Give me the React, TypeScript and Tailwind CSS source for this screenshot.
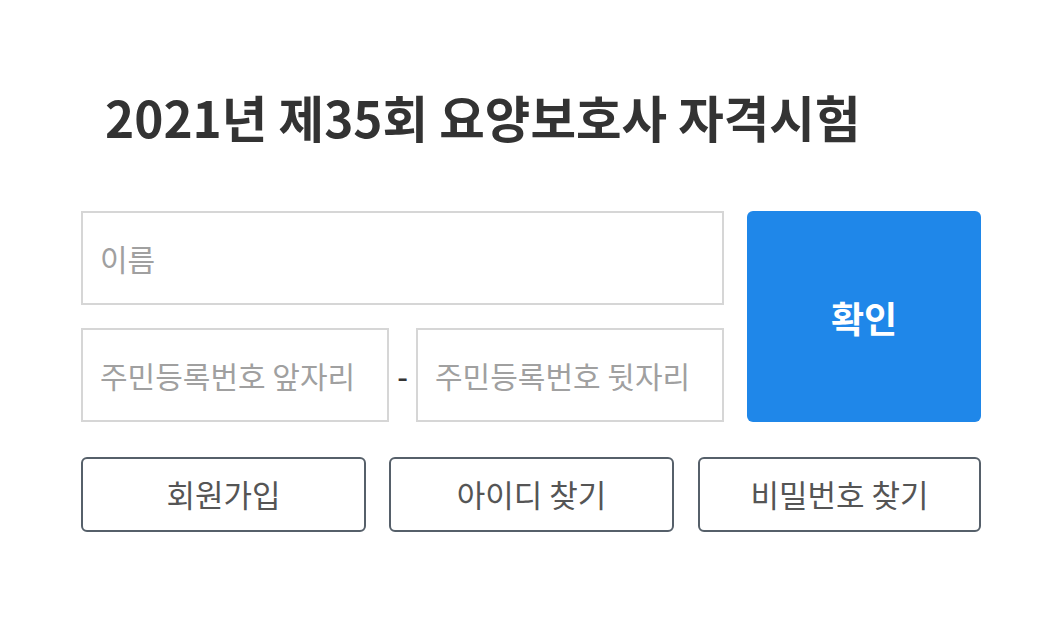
export default function App() {
  return (
    <div className="min-h-screen bg-white font-['Noto_Sans_CJK_KR','Noto_Sans',sans-serif]">
      <div className="ml-[81px] w-[900px] pt-[77px]">
        <h1 className="pl-[24px] text-[49.5px] font-bold leading-[80px] text-[#333]">
          2021년 제35회 요양보호사 자격시험
        </h1>

        <div className="mt-[54px] flex gap-[23px]">
          <div className="flex w-[643px] flex-col gap-[23px]">
            <input
              type="text"
              placeholder="이름"
              className="h-[94px] w-full border-2 border-[#d6d6d6] px-[17px] text-[30px] text-[#333] outline-none placeholder:text-[#a0a0a0]"
            />
            <div className="flex items-center">
              <input
                type="text"
                placeholder="주민등록번호 앞자리"
                className="h-[94px] w-[308px] border-2 border-[#d6d6d6] px-[17px] text-[30px] text-[#333] outline-none placeholder:text-[#a0a0a0]"
              />
              <span className="w-[27px] text-center text-[30px] font-medium text-[#333]">-</span>
              <input
                type="text"
                placeholder="주민등록번호 뒷자리"
                className="h-[94px] w-[308px] border-2 border-[#d6d6d6] px-[17px] text-[30px] text-[#333] outline-none placeholder:text-[#a0a0a0]"
              />
            </div>
          </div>
          <button className="h-[211px] w-[234px] rounded-[6px] bg-[#1f87e9] text-[36px] font-bold text-white">
            확인
          </button>
        </div>

        <div className="mt-[35px] flex">
          <button className="h-[75px] w-[285px] rounded-[6px] border-2 border-[#56606a] text-[31px] text-[#555]">
            회원가입
          </button>
          <button className="ml-[23px] h-[75px] w-[285px] rounded-[6px] border-2 border-[#56606a] text-[31px] text-[#555]">
            아이디 찾기
          </button>
          <button className="ml-[24px] h-[75px] w-[283px] rounded-[6px] border-2 border-[#56606a] text-[31px] text-[#555]">
            비밀번호 찾기
          </button>
        </div>
      </div>
    </div>
  );
}
